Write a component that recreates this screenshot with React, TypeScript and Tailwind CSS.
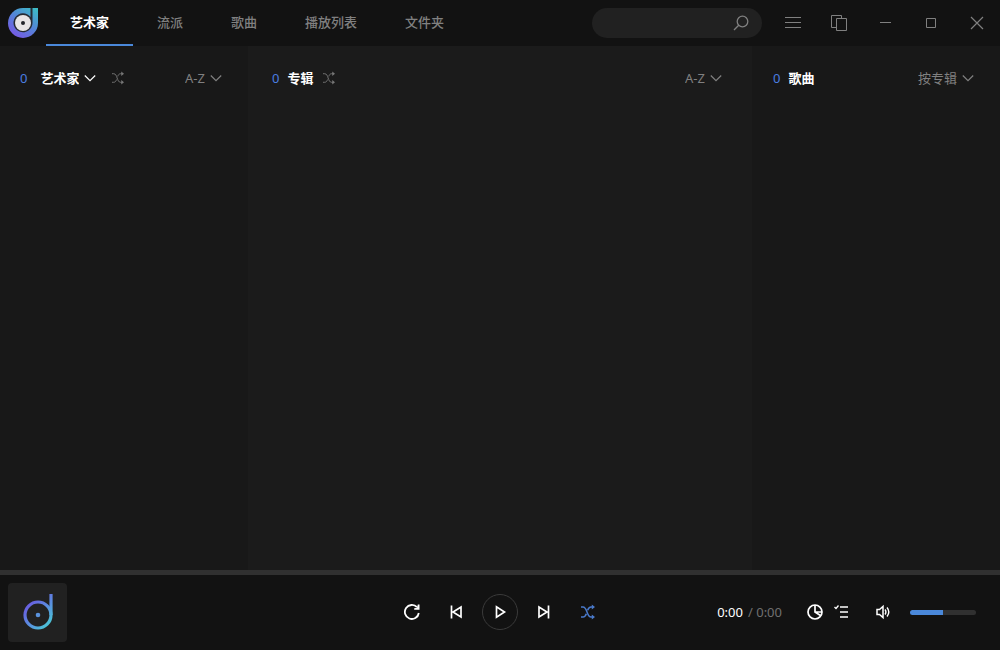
import { useState } from "react";
import clsx from "clsx";

const tabs = ["艺术家", "流派", "歌曲", "播放列表", "文件夹"];

function Logo() {
  return (
    <svg className="h-[30px] w-[30px]" viewBox="0 0 30 30" aria-hidden="true">
      <defs>
        <linearGradient id="logo" x1="0.2" y1="1" x2="0.9" y2="0">
          <stop offset="0" stopColor="#7a55e6" />
          <stop offset="0.5" stopColor="#5583d8" />
          <stop offset="1" stopColor="#3cbcc6" />
        </linearGradient>
      </defs>
      <path d="M15 0H30V15A15 15 0 1 1 15 0Z" fill="url(#logo)" />
      <path d="M22.500 0H24.500V15A9.500 9.500 0 1 1 22.500 9Z" fill="#262b33" />
      <circle cx="15" cy="15" r="8" fill="#e8e5e6" />
      <circle cx="15" cy="15" r="2" fill="#23252b" />
    </svg>
  );
}

function CoverLogo() {
  return (
    <svg className="h-9 w-[30px]" viewBox="0 0 30 36" fill="none" aria-hidden="true">
      <defs>
        <linearGradient id="cover" gradientUnits="userSpaceOnUse" x1="4" y1="10" x2="27" y2="33">
          <stop offset="0" stopColor="#6a5be0" />
          <stop offset="0.5" stopColor="#5a8fe0" />
          <stop offset="1" stopColor="#48ccd4" />
        </linearGradient>
      </defs>
      <circle cx="15" cy="21" r="13" stroke="url(#cover)" strokeWidth="3.2" />
      <path d="M28 0V21" stroke="url(#cover)" strokeWidth="3.2" />
      <circle cx="15" cy="21" r="2.3" fill="#5b93dc" />
    </svg>
  );
}

function Chevron() {
  return (
    <svg className="pointer-events-none h-3 w-3" viewBox="0 0 12 12" fill="none" stroke="currentColor" strokeWidth="1.2" aria-hidden="true">
      <path d="M0.800 3.500L6 8.700L11.200 3.500" />
    </svg>
  );
}

function Shuffle({ className, strokeWidth = 1.1 }: { className: string; strokeWidth?: number }) {
  return (
    <svg className={className} viewBox="0 0 14 14" fill="none" stroke="currentColor" strokeWidth={strokeWidth} aria-hidden="true">
      <path d="M0 2H2C6.500 2 5.500 12 10 12H12M0 12H2C3.800 12 4.700 10.600 5.300 8.800M6.700 5.200C7.300 3.400 8.200 2 10 2H12" />
      <path d="M10.800 -0.600L14 2L10.800 4.600ZM10.800 9.400L14 12L10.800 14.600Z" fill="currentColor" stroke="none" />
    </svg>
  );
}

function SortSelect({ label, options }: { label: string; options: string[] }) {
  return (
    <div className="ml-auto flex items-center gap-[5px] text-[#808080]">
      <select aria-label={label} className="field-sizing-content appearance-none bg-transparent outline-none">
        {options.map((option) => (
          <option key={option}>{option}</option>
        ))}
      </select>
      <Chevron />
    </div>
  );
}

function WindowButton({ label, children }: { label: string; children: React.ReactNode }) {
  return (
    <button aria-label={label} className="flex w-[46px] items-center justify-center text-[#808080] hover:bg-[#222]">
      <svg className="h-4 w-4" viewBox="0 0 16 16" fill="none" stroke="currentColor">
        {children}
      </svg>
    </button>
  );
}

function PlayerButton({ label, className, children }: { label: string; className?: string; children: React.ReactNode }) {
  return (
    <button aria-label={label} className={clsx("flex h-9 items-center justify-center", className)}>
      {children}
    </button>
  );
}

export default function App() {
  const [active, setActive] = useState(tabs[0]);
  const [position, setPosition] = useState(0);
  const [volume, setVolume] = useState(50);

  return (
    <div className="flex h-screen flex-col bg-[#121212] font-['Noto_Sans','Noto_Sans_CJK_SC',sans-serif] text-[13px] leading-5 text-white">
      {/* Title bar */}
      <header className="flex h-[46px] shrink-0">
        <div className="flex w-[46px] items-center pl-2">
          <Logo />
        </div>
        <nav className="flex">
          {tabs.map((tab) => (
            <button
              key={tab}
              onClick={() => setActive(tab)}
              className={clsx(
                "border-b-2 px-6",
                active === tab ? "border-b-[#4a88da] font-bold text-white" : "border-b-transparent font-medium text-[#808080]",
              )}
            >
              {tab}
            </button>
          ))}
        </nav>
        <div className="mr-2 ml-auto flex h-[30px] w-[170px] items-center self-center rounded-full bg-[#212121] pr-[13px]">
          <input type="text" aria-label="搜索" className="w-full min-w-0 bg-transparent pl-4 outline-none" />
          <svg className="h-4 w-4 shrink-0 text-[#808080]" viewBox="0 0 16 16" fill="none" stroke="currentColor" strokeWidth="1.3" aria-hidden="true">
            <circle cx="9.500" cy="6.500" r="5.300" />
            <path d="M5.700 10.300L1 15" />
          </svg>
        </div>
        <WindowButton label="菜单">
          <path d="M0 2.500H16M0 7.500H16M0 12.500H16" />
        </WindowButton>
        <WindowButton label="迷你播放器">
          <path d="M5.500 12.500H0.500V0.500H10.500V3.500M5.500 3.500H15.500V15.500H5.500Z" />
        </WindowButton>
        <WindowButton label="最小化">
          <path d="M3 7.500H14" />
        </WindowButton>
        <WindowButton label="最大化">
          <path d="M3.500 3.500H12.500V12.500H3.500Z" />
        </WindowButton>
        <WindowButton label="关闭">
          <path d="M2 2L14 14M14 2L2 14" strokeWidth="1.2" />
        </WindowButton>
      </header>

      {/* Library */}
      <main className="flex min-h-0 flex-1 bg-[#181818]">
        <section className="w-[248px] shrink-0">
          <div className="flex h-16 items-center pr-[26px] pl-5">
            <span className="text-[#4a7ee0]">0</span>
            <div className="ml-[13px] flex items-center gap-[5px]">
              <select aria-label="艺术家类型" className="field-sizing-content appearance-none bg-transparent font-bold outline-none">
                <option>艺术家</option>
                <option>专辑艺术家</option>
              </select>
              <Chevron />
            </div>
            <button aria-label="随机播放艺术家" className="ml-4 text-[#777]">
              <Shuffle className="h-3 w-3 overflow-visible" />
            </button>
            <SortSelect label="艺术家排序" options={["A-Z", "Z-A"]} />
          </div>
        </section>
        <section className="min-w-0 flex-1 bg-[#1b1b1b]">
          <div className="flex h-16 items-center pr-[30px] pl-6">
            <span className="text-[#4a7ee0]">0</span>
            <h2 className="ml-2 font-bold">专辑</h2>
            <button aria-label="随机播放专辑" className="ml-[10px] text-[#777]">
              <Shuffle className="h-3 w-3 overflow-visible" />
            </button>
            <SortSelect label="专辑排序" options={["A-Z", "Z-A"]} />
          </div>
        </section>
        <section className="w-[248px] shrink-0">
          <div className="flex h-16 items-center pr-[26px] pl-[21px]">
            <span className="text-[#4a7ee0]">0</span>
            <h2 className="ml-2 font-bold">歌曲</h2>
            <SortSelect label="歌曲排序" options={["按专辑", "A-Z"]} />
          </div>
        </section>
      </main>

      {/* Playback position */}
      <input
        type="range"
        aria-label="播放进度"
        value={position}
        onChange={(e) => setPosition(Number(e.target.value))}
        className="h-[5px] w-full shrink-0 appearance-none bg-[#303030] [&::-webkit-slider-thumb]:h-0 [&::-webkit-slider-thumb]:w-0 [&::-webkit-slider-thumb]:appearance-none"
      />

      {/* Player */}
      <footer className="grid h-[75px] shrink-0 grid-cols-[1fr_auto_1fr] items-center pr-6 pb-px pl-2">
        <div className="flex h-[59px] w-[59px] items-center justify-center rounded bg-[#212121]">
          <CoverLogo />
        </div>

        <div className="flex items-center pl-4">
          <PlayerButton label="循环" className="w-11">
            <svg className="h-4 w-4" viewBox="0 0 16 16" fill="none" stroke="currentColor" strokeWidth="1.800">
              <path d="M14.800 9A7 7 0 1 1 13 3.200" />
              <path d="M15.500 0.500V5.800H10.200V4.200L13 3.800L13.800 0.500Z" fill="currentColor" stroke="none" />
            </svg>
          </PlayerButton>
          <PlayerButton label="上一首" className="w-11">
            <svg className="h-4 w-4" viewBox="0 0 16 16" fill="none" stroke="currentColor" strokeWidth="1.700">
              <path d="M3.500 1.500V14.500M13 3V13L5 8Z" />
            </svg>
          </PlayerButton>
          <PlayerButton label="播放" className="mx-1 w-9 rounded-full border border-[#3a3a3a]">
            <svg className="h-4 w-4" viewBox="0 0 16 16" fill="none" stroke="currentColor" strokeWidth="1.700">
              <path d="M4.500 2.800V13.200L12.500 8Z" />
            </svg>
          </PlayerButton>
          <PlayerButton label="下一首" className="w-11">
            <svg className="h-4 w-4" viewBox="0 0 16 16" fill="none" stroke="currentColor" strokeWidth="1.700">
              <path d="M12.500 1.500V14.500M3 3V13L11 8Z" />
            </svg>
          </PlayerButton>
          <PlayerButton label="随机播放" className="w-11 text-[#4a7acb]">
            <Shuffle className="h-[14px] w-[14px] overflow-visible" strokeWidth={1.5} />
          </PlayerButton>
        </div>

        <div className="flex items-center justify-end">
          <span>0:00</span>
          <span className="ml-[5px] text-[#707070]">/ 0:00</span>
          <PlayerButton label="均衡器" className="ml-[19px] w-[27px]">
            <svg className="h-4 w-4" viewBox="0 0 16 16" fill="none" stroke="currentColor" strokeWidth="1.700">
              <circle cx="8" cy="8" r="7" />
              <path d="M8 1V8L13.500 11.500M8 8H15" />
            </svg>
          </PlayerButton>
          <PlayerButton label="播放队列" className="w-[27px]">
            <svg className="h-4 w-4" viewBox="0 0 16 16" fill="none" stroke="currentColor" strokeWidth="1.700">
              <path d="M6 3H14M6 8H14M6 13H14" />
              <path d="M0.500 3L2 4.500L4.500 1.500" strokeWidth="1.300" />
            </svg>
          </PlayerButton>
          <PlayerButton label="静音" className="ml-[14px] w-[27px]">
            <svg className="h-4 w-4" viewBox="0 0 16 16" fill="none" stroke="currentColor" strokeWidth="1.500">
              <path d="M2 5.500H4.500L8 2.500V13.500L4.500 10.500H2Z" />
              <path d="M10 5.500Q11.800 8 10 10.500M12 3.500Q15.600 8 12 12.500" strokeWidth="1.400" />
            </svg>
          </PlayerButton>
          <input
            type="range"
            aria-label="音量"
            value={volume}
            onChange={(e) => setVolume(Number(e.target.value))}
            style={{ backgroundImage: `linear-gradient(to right, #4a88da ${volume}%, transparent ${volume}%)` }}
            className="ml-[14px] h-[5px] w-[66px] appearance-none rounded-sm bg-[#303030] [&::-webkit-slider-thumb]:h-0 [&::-webkit-slider-thumb]:w-0 [&::-webkit-slider-thumb]:appearance-none"
          />
        </div>
      </footer>
    </div>
  );
}
